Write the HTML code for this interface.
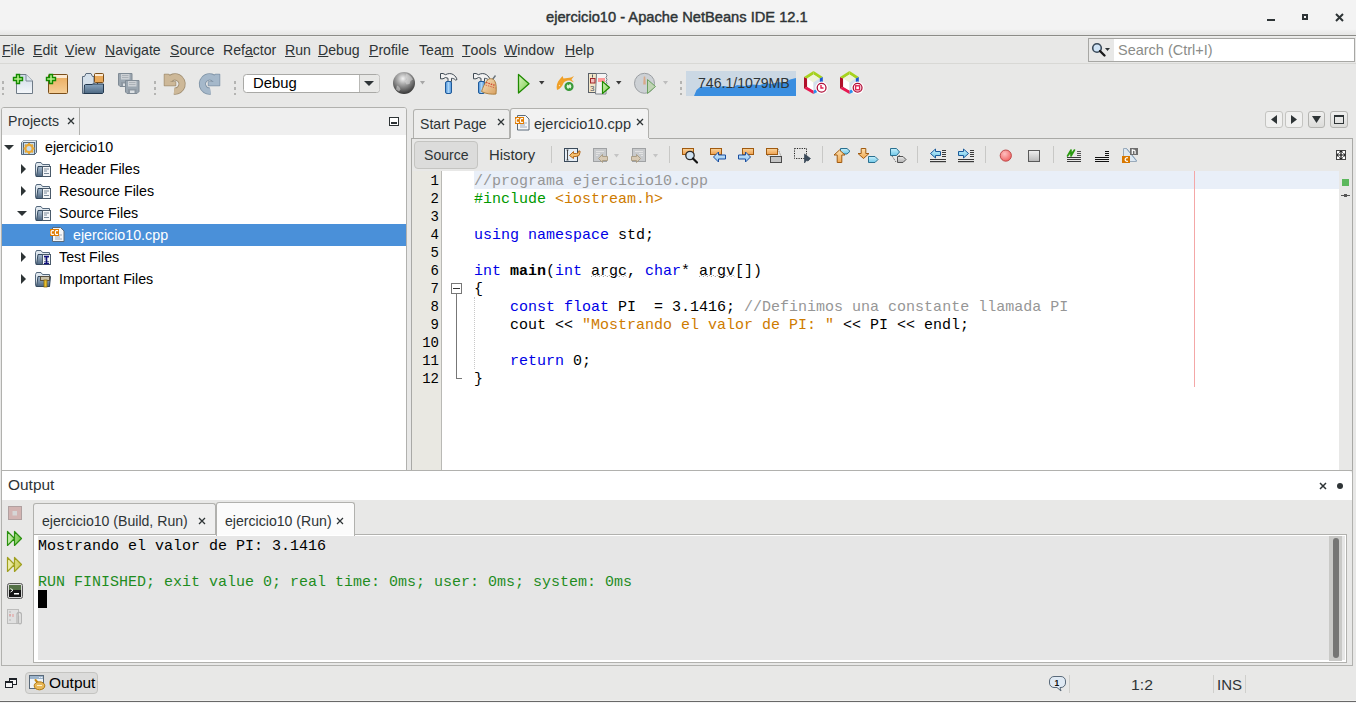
<!DOCTYPE html>
<html><head><meta charset="utf-8">
<style>
*{margin:0;padding:0;box-sizing:border-box}
html,body{width:1356px;height:703px;overflow:hidden;background:#e8e8e7;font-family:"Liberation Sans",sans-serif;color:#2e3436}
.a{position:absolute}
.t{position:absolute;white-space:pre;font-size:15px;line-height:18px;transform-origin:0 0;transform:scaleX(.94)}
.m{position:absolute;white-space:pre;font-family:"Liberation Mono",monospace;font-size:15px;line-height:18px;color:#000}
u{text-decoration:none;position:relative}
u:after{content:"";position:absolute;left:0;right:0;bottom:1px;height:1px;background:#2e3436}
svg{position:absolute;overflow:visible}
.cm{color:#969696}.kw{color:#0000e6}.pp{color:#009900}.st{color:#ce7b00}.b{font-weight:bold}
</style></head><body>
<!-- ===== title bar ===== -->
<div class="a" style="left:0;top:0;width:1356px;height:35px;background:linear-gradient(#f3f3f3 0,#f3f3f3 29px,#e6e6e5 35px)"></div>
<div class="a" style="left:0;top:35px;width:1356px;height:1px;background:#8c8c88"></div>
<div class="a" style="left:0;top:36px;width:1356px;height:1px;background:#eeeeec"></div>
<div class="t" style="left:546px;top:8px;-webkit-text-stroke:.45px #2e3436;transform:scaleX(.978)">ejercicio10 - Apache NetBeans IDE 12.1</div>
<div class="a" style="left:1267px;top:19px;width:8px;height:2px;background:#2e3436"></div>
<div class="a" style="left:1302px;top:14px;width:6px;height:6px;border:2px solid #2e3436"></div>
<svg style="left:1335px;top:13px" width="9" height="9"><path d="M1 1L8 8M8 1L1 8" stroke="#2e3436" stroke-width="2"/></svg>

<!-- ===== menubar ===== -->
<div class="a" style="left:0;top:63px;width:1356px;height:1px;background:#d8d8d5"></div>
<div class="t" style="left:2px;top:41px"><u>F</u>ile</div>
<div class="t" style="left:33px;top:41px"><u>E</u>dit</div>
<div class="t" style="left:65px;top:41px"><u>V</u>iew</div>
<div class="t" style="left:105px;top:41px"><u>N</u>avigate</div>
<div class="t" style="left:170px;top:41px"><u>S</u>ource</div>
<div class="t" style="left:223px;top:41px">Ref<u>a</u>ctor</div>
<div class="t" style="left:285px;top:41px"><u>R</u>un</div>
<div class="t" style="left:318px;top:41px"><u>D</u>ebug</div>
<div class="t" style="left:369px;top:41px"><u>P</u>rofile</div>
<div class="t" style="left:419px;top:41px">Tea<u>m</u></div>
<div class="t" style="left:462px;top:41px"><u>T</u>ools</div>
<div class="t" style="left:504px;top:41px"><u>W</u>indow</div>
<div class="t" style="left:565px;top:41px"><u>H</u>elp</div>

<!-- search -->
<div class="a" style="left:1088px;top:38px;width:267px;height:24px;border:1px solid #a7a7a4;background:#fff"></div>
<div class="a" style="left:1089px;top:39px;width:25px;height:22px;background:#e8e8e7"></div>
<svg style="left:1091px;top:42px" width="20" height="16"><circle cx="6" cy="6" r="4.3" fill="#cfe3f5" stroke="#3a4a5a" stroke-width="1.6"/><path d="M9 9L13.5 13.5" stroke="#1a1a1a" stroke-width="2.4" stroke-linecap="round"/><path d="M14 6h5l-2.5 3z" fill="#2e3436"/></svg>
<div class="t" style="left:1118px;top:41px;color:#8a8c88;transform:scaleX(.965)">Search (Ctrl+I)</div>

<!-- ===== toolbar ===== -->
<svg style="left:0;top:64px" width="900" height="40" viewBox="0 64 900 40">
<defs>
<linearGradient id="gPage" x1="0" y1="0" x2="0" y2="1"><stop offset="0" stop-color="#cfdbe8"/><stop offset="1" stop-color="#f4f7fa"/></linearGradient>
<linearGradient id="gBox" x1="0" y1="0" x2="0" y2="1"><stop offset="0" stop-color="#e9a95a"/><stop offset="1" stop-color="#f5cf98"/></linearGradient>
<linearGradient id="gFold" x1="0" y1="0" x2="0" y2="1"><stop offset="0" stop-color="#8aa6c0"/><stop offset="1" stop-color="#4d6882"/></linearGradient>
<radialGradient id="gGlobe" cx=".45" cy=".3" r=".75"><stop offset="0" stop-color="#f4f4f4"/><stop offset=".35" stop-color="#a8a8a8"/><stop offset=".8" stop-color="#505050"/><stop offset="1" stop-color="#2a2a2a"/></radialGradient>
<linearGradient id="gRun" x1="0" y1="0" x2="1" y2="1"><stop offset="0" stop-color="#d9f5c0"/><stop offset="1" stop-color="#7ccc4e"/></linearGradient>
</defs>
<!-- grips -->
<g fill="#b4b4b2"><rect x="2" y="81" width="2" height="3"/><rect x="2" y="87" width="2" height="3"/><rect x="2" y="93" width="2" height="2"/>
<rect x="154" y="81" width="2" height="3"/><rect x="154" y="87" width="2" height="3"/><rect x="154" y="93" width="2" height="2"/>
<rect x="234" y="81" width="2" height="3"/><rect x="234" y="87" width="2" height="3"/><rect x="234" y="93" width="2" height="2"/>
<rect x="680" y="81" width="2" height="3"/><rect x="680" y="87" width="2" height="3"/><rect x="680" y="93" width="2" height="2"/></g>
<!-- new file -->
<path d="M16.5 74.5h9.5l6.5 6.5v12.5h-16z" fill="url(#gPage)" stroke="#6e7a86"/>
<path d="M26 74.5v6.5h6.5" fill="#dde6ee" stroke="#7c8a98"/>
<path d="M16.5 74.5h3v3h3v3h-3v3h-3v-3h-3v-3h3z" fill="#b6f08a" stroke="#138a00" stroke-width="1.4"/>
<!-- new project -->
<rect x="48.5" y="74.5" width="19" height="19" rx="1" fill="url(#gBox)" stroke="#7a4e1a"/>
<rect x="49" y="75" width="18" height="3" fill="#fbe9d2"/>
<path d="M49.5 74.5h3v3h3v3h-3v3h-3v-3h-3v-3h3z" fill="#b6f08a" stroke="#138a00" stroke-width="1.4"/>
<!-- open project -->
<path d="M82.5 76.5h2l1.5-3h5l1.5 3h1.5v16.5a.5.5 0 0 1 -.5.5h-11z" fill="#d5e0ea" stroke="#5a6a7c"/>
<rect x="94.5" y="73.5" width="9" height="9" rx="1" fill="#e9a95a" stroke="#7a4e1a"/>
<rect x="95" y="74" width="8" height="2" fill="#fbe9d2"/>
<path d="M97.5 83v2" stroke="#3a4a5a"/>
<path d="M84 93.5l0.5-8.5l1-0.5h6.5l1-0.5h10.5v8.5l-1 1z" fill="url(#gFold)" stroke="#23384e"/>
<!-- save all -->
<path d="M118.5 73.5h13.5v11l-2 2h-10l-1.5-1.5z" fill="#9ba6b0" stroke="#808b95"/>
<rect x="121" y="74" width="8.5" height="5.5" fill="#cdd1d5"/>
<path d="M122 75.5h6.5M122 77.5h6.5" stroke="#a8aeb4" stroke-width=".9"/>
<rect x="121" y="82" width="8.5" height="4" fill="#8e98a2"/>
<rect x="123" y="83.5" width="4.5" height="2.5" fill="#dde1e4"/>
<path d="M125.5 80.5h13.5v11l-2 2h-10l-1.5-1.5z" fill="#9ba6b0" stroke="#808b95"/>
<rect x="128" y="81" width="8.5" height="5.5" fill="#cdd1d5"/>
<path d="M129 82.5h6.5M129 84.5h6.5" stroke="#a8aeb4" stroke-width=".9"/>
<rect x="128" y="89" width="8.5" height="4" fill="#8e98a2"/>
<rect x="130" y="90.5" width="4.5" height="2.5" fill="#dde1e4"/>
<!-- undo -->
<g stroke="#a08e72" fill="#a08e72" stroke-linejoin="round">
<path d="M169.18 79.93A7.1 7.1 0 1 1 174.13 91.05" fill="none" stroke-width="7.3"/>
<path d="M164.5 74.5L168.5 74.5L172 78L170.5 82L175.5 82L175.5 85.5L164.5 85.5Z" stroke-width="1.5"/></g>
<g stroke="#cdb898" fill="#cdb898" stroke-linejoin="round">
<path d="M169.18 79.93A7.1 7.1 0 1 1 174.13 91.05" fill="none" stroke-width="5.6"/>
<path d="M164.5 74.5L168.5 74.5L172 78L170.5 82L175.5 82L175.5 85.5L164.5 85.5Z" stroke-width="0"/></g>
<!-- redo -->
<g stroke="#7f93a6" fill="#7f93a6" stroke-linejoin="round">
<path d="M215.32 79.93A7.1 7.1 0 1 0 210.37 91.05" fill="none" stroke-width="7.3"/>
<path d="M219.5 74.5L215.5 74.5L212 78L213.5 82L208.5 82L208.5 85.5L219.5 85.5Z" stroke-width="1.5"/></g>
<g stroke="#a5b8ca" fill="#a5b8ca" stroke-linejoin="round">
<path d="M215.32 79.93A7.1 7.1 0 1 0 210.37 91.05" fill="none" stroke-width="5.6"/>
<path d="M219.5 74.5L215.5 74.5L212 78L213.5 82L208.5 82L208.5 85.5L219.5 85.5Z" stroke-width="0"/></g>
<!-- combo -->
<rect x="243.5" y="74.5" width="136" height="18" rx="3" fill="#fff" stroke="#a9a9a6"/>
<path d="M359.5 75v17" stroke="#b9b9b6"/>
<path d="M360 75h16.5a3 3 0 0 1 3 3v11a3 3 0 0 1 -3 3h-16.5z" fill="#e8e8e6"/>
<path d="M364 81h10l-5 5z" fill="#2e3436"/>
<!-- globe -->
<circle cx="404" cy="83" r="11" fill="url(#gGlobe)"/>
<path d="M406 73.5c3 1 6 3.5 7 6l-2.5 1.5l-1 3l-3 0.5l-1.5-3l2-2l-1.5-3z M397 85.5c1.5 0.5 3 2 3.5 4l-1.5 2l-3-2z" fill="#d8d8d8" opacity=".55"/>
<path d="M420 81h5l-2.5 3.5z" fill="#a6a6a6"/>
<!-- hammer -->
<defs><linearGradient id="gHnd" x1="0" y1="0" x2="1" y2="0"><stop offset="0" stop-color="#4a90d8"/><stop offset=".5" stop-color="#a8d4f8"/><stop offset="1" stop-color="#4a90d8"/></linearGradient>
<linearGradient id="gBrm" x1="0" y1="0" x2="1" y2="1"><stop offset="0" stop-color="#f8e4c0"/><stop offset="1" stop-color="#d8a060"/></linearGradient></defs>
<g id="ham">
<path d="M440.5 73.5h2.5l2.5 1.2c2.5-1.5 6-1.6 8.2 0.2c1.6 1.2 2.8 2.8 3.3 4.6l-1.3 0.6c-1.2-1.2-2.6-1.8-4.2-1.8v3.2h-3.5v-3.2l-2.5-0.8l-2.5 1.3h-2.5z" fill="#f2f2f2" stroke="#3f4a54" stroke-linejoin="round"/>
<rect x="445.5" y="81.5" width="6" height="12" rx="1.5" fill="url(#gHnd)" stroke="#1f5a9a"/>
</g>
<!-- clean build -->
<use href="#ham" x="33" y="0"/>
<path d="M492.5 79.5l3-4" stroke="#6a747c" stroke-width="1.4"/>
<path d="M481.5 91.5c1.5-4 3-8.5 6-11.5c2-2 5.5-1.5 7 0.5c2 3 2 8 1.5 13.5c-4 0.5-10 0-14.5-2.5z" fill="url(#gBrm)" stroke="#a87a3a" stroke-width=".9"/>
<path d="M486 82.5l9.5 3" stroke="#d04030" stroke-width="1.3" stroke-dasharray="1.5 1"/>
<path d="M485.5 85l10 3" stroke="#d04030" stroke-width="1" stroke-dasharray="1.5 1" opacity=".7"/>
<!-- run -->
<path d="M518.5 74.5v18.5l10.5-9.25z" fill="url(#gRun)" stroke="#1f8a00" stroke-width="1.3" stroke-linejoin="round"/>
<path d="M539 81h5.5l-2.75 3.5z" fill="#3a3a3a"/>
<!-- debug fish -->
<path d="M557 90C556 86 557 82 560 79L562.5 76L563.5 78.5C566 78 569 78 571 77.5L574 76L571.5 79.5L574 82.5L570 80.5C567 80.5 565 81 563.5 83C562.5 86 560 89 557 90Z" fill="#f0a028"/>
<circle cx="559.5" cy="85.5" r=".7" fill="#fce0b0"/>
<circle cx="569" cy="86.5" r="3.5" fill="#e0f4d8" stroke="#3a9a3a" stroke-width="2.2"/>
<path d="M566.5 83.5l3.5-1.5l-1 3.5zM571.5 89.5l-3.5 1.5l1-3.5z" fill="#3a9a3a"/>
<!-- test/profile -->
<rect x="588.5" y="73.5" width="8" height="19" fill="#f2e6c8" stroke="#5a6068"/>
<path d="M596.5 73.5h9.5l1 2l-1 2l1 2l-1 2l1 2l-1 2v8.5h-10.5z" fill="#f4f4f4" stroke="#7a8088"/>
<rect x="590.5" y="78.5" width="4.5" height="4.5" fill="#f0c0c0" stroke="#a02828" stroke-width="1"/>
<path d="M592.5 74.5v3" stroke="#5a6068"/>
<text x="590" y="91" font-family="Liberation Sans" font-size="8" fill="#4a5060">3</text>
<rect x="598" y="78" width="7" height="4" fill="#ff9a9a"/>
<path d="M602.5 81.5v12l7-6z" fill="url(#gRun)" stroke="#1f8a00" stroke-width="1.2" stroke-linejoin="round"/>
<path d="M616 81h5.5l-2.75 3.5z" fill="#3a3a3a"/>
<!-- gauge -->
<circle cx="644.5" cy="83.3" r="10" fill="#cdd1d5" stroke="#9a9ea2"/>
<path d="M643.8 76.5h1.4l0.6 8h-2.6z" fill="#d8a888"/>
<path d="M647.5 79.5v14l8-7z" fill="#c0d4b4" stroke="#6aa060" stroke-linejoin="round"/>
<path d="M663 81h5l-2.5 3.5z" fill="#bdbdbd"/>
<!-- memory -->
<rect x="686" y="71" width="110" height="25" fill="#cbd8e4"/>
<path d="M694 96L696.5 90L700 87L712 86.5L716 87.5L724 86L733 87.5L737 85L745 86L752 84.5L760 85L765 83L772 84L778 82L785 83L790 79.5L796 78V96Z" fill="#3a8ee0"/>
<!-- profiler 1 -->
<g transform="translate(0,0)"><path d="M813.5 71 L822.8 77 L819.6 78.6 L813.5 74.6Z" fill="#a6d21e"/><path d="M822.8 77 L822.8 89 L819.6 87.4 L819.6 78.6Z" fill="#1a5ad0"/><path d="M822.8 89 L813.5 94 L813.5 90.6 L819.6 87.4Z" fill="#2a90f0"/><path d="M813.5 94 L804 88.5 L807.2 86.8 L813.5 90.6Z" fill="#e81850"/><path d="M804 88.5 L804 77 L807.2 78.6 L807.2 86.8Z" fill="#b0102a"/><path d="M804 77 L813.5 71 L813.5 74.6 L807.2 78.6Z" fill="#a6d21e"/><path d="M807.2 78.6 L813.5 74.6 L819.6 78.6 L813.5 82.6Z" fill="#eef4d8"/><path d="M807.2 78.6 L813.5 82.6 L813.5 90.6 L807.2 86.8Z" fill="#fff"/><path d="M813.5 82.6 L819.6 78.6 L819.6 87.4 L813.5 90.6Z" fill="#d4e0ec"/><circle cx="821.6" cy="87.8" r="6.2" fill="#fff"/><circle cx="821.6" cy="87.8" r="4.4" fill="#fff" stroke="#b0103a" stroke-width="1.3"/><path d="M821 85v3h2.5" stroke="#e02050" stroke-width="1.4" fill="none"/></g>
<g transform="translate(36,0)"><path d="M813.5 71 L822.8 77 L819.6 78.6 L813.5 74.6Z" fill="#a6d21e"/><path d="M822.8 77 L822.8 89 L819.6 87.4 L819.6 78.6Z" fill="#1a5ad0"/><path d="M822.8 89 L813.5 94 L813.5 90.6 L819.6 87.4Z" fill="#2a90f0"/><path d="M813.5 94 L804 88.5 L807.2 86.8 L813.5 90.6Z" fill="#e81850"/><path d="M804 88.5 L804 77 L807.2 78.6 L807.2 86.8Z" fill="#b0102a"/><path d="M804 77 L813.5 71 L813.5 74.6 L807.2 78.6Z" fill="#a6d21e"/><path d="M807.2 78.6 L813.5 74.6 L819.6 78.6 L813.5 82.6Z" fill="#eef4d8"/><path d="M807.2 78.6 L813.5 82.6 L813.5 90.6 L807.2 86.8Z" fill="#fff"/><path d="M813.5 82.6 L819.6 78.6 L819.6 87.4 L813.5 90.6Z" fill="#d4e0ec"/><circle cx="821.6" cy="87.8" r="6.2" fill="#fff"/><circle cx="821.6" cy="87.8" r="4.4" fill="#fff" stroke="#b0103a" stroke-width="1.3"/><rect x="819.6" y="85.8" width="4" height="4" fill="none" stroke="#e02050" stroke-width="1.4"/></g>
</svg>
<div class="t" style="left:253px;top:74px;color:#000;transform:scaleX(.99)">Debug</div>
<div class="t" style="left:698px;top:74px;color:#2e3436">746.1/1079MB</div>


<!-- ===== projects panel ===== -->
<div class="a" style="left:1px;top:107px;width:406px;height:364px;border:1px solid #b1b1ae;border-radius:3px 3px 0 0;background:#fff"></div>
<div class="a" style="left:2px;top:108px;width:404px;height:27px;background:#efefef;border-radius:2px 2px 0 0"></div>
<div class="a" style="left:79px;top:108px;width:1px;height:27px;background:#b1b1ae"></div>
<div class="t" style="left:8px;top:112px">Projects</div>
<svg style="left:67px;top:117px" width="8" height="8"><path d="M1 1L7 7M7 1L1 7" stroke="#2e3436" stroke-width="1.3"/></svg>
<div class="a" style="left:389px;top:117px;width:10px;height:9px;border:1.5px solid #2e3436;background:#fff"></div>
<div class="a" style="left:391px;top:122px;width:6px;height:2px;background:#2e3436"></div>

<!-- tree -->
<div class="a" style="left:2px;top:224px;width:404px;height:22px;background:#4a90d9"></div>
<svg style="left:4px;top:145px" width="10" height="6"><path d="M0 0h10L5 5z" fill="#2e3436"/></svg>
<svg style="left:21px;top:164px" width="6" height="10"><path d="M0 0v10L5 5z" fill="#2e3436"/></svg>
<svg style="left:21px;top:186px" width="6" height="10"><path d="M0 0v10L5 5z" fill="#2e3436"/></svg>
<svg style="left:17px;top:211px" width="10" height="6"><path d="M0 0h10L5 5z" fill="#2e3436"/></svg>
<svg style="left:21px;top:252px" width="6" height="10"><path d="M0 0v10L5 5z" fill="#2e3436"/></svg>
<svg style="left:21px;top:274px" width="6" height="10"><path d="M0 0v10L5 5z" fill="#2e3436"/></svg>
<div class="t" style="left:45px;top:138px;color:#000;transform:scaleX(.95)">ejercicio10</div>
<div class="t" style="left:59px;top:160px;color:#000;transform:scaleX(.95)">Header Files</div>
<div class="t" style="left:59px;top:182px;color:#000;transform:scaleX(.95)">Resource Files</div>
<div class="t" style="left:59px;top:204px;color:#000;transform:scaleX(.95)">Source Files</div>
<div class="t" style="left:73px;top:226px;color:#fff;transform:scaleX(.95)">ejercicio10.cpp</div>
<div class="t" style="left:59px;top:248px;color:#000;transform:scaleX(.95)">Test Files</div>
<div class="t" style="left:59px;top:270px;color:#000;transform:scaleX(.95)">Important Files</div>
<svg style="left:0;top:136px" width="80" height="150" viewBox="0 136 80 150">
<defs>
<linearGradient id="gFld" x1="0" y1="0" x2="0" y2="1"><stop offset="0" stop-color="#a8bccf"/><stop offset="1" stop-color="#4e6680"/></linearGradient>
<symbol id="fold" viewBox="0 0 16 16" width="16" height="16">
<path d="M0.5 3.5v11a1 1 0 0 0 1 1h13v-12h-7l-1.5-2h-4.5z" fill="#dfe7ee" stroke="#55687c"/>
<path d="M1.5 15.5l1.5-10h12.5l-1 10z" fill="url(#gFld)" stroke="#34495e"/>
</symbol>
<symbol id="doc" viewBox="0 0 9 11" width="9" height="11">
<rect x="0.5" y="0.5" width="8" height="10" fill="#f4f6f8" stroke="#4a5a6a"/>
<path d="M2 3h5M2 5h3M2 7.5h5" stroke="#7a8a9a" stroke-width="1"/>
</symbol>
</defs>
<!-- project icon -->
<path d="M21.5 142.5l2-2h13v12l-2 2h-13z" fill="#bcd3e6" stroke="#5a6a7a"/>
<path d="M23.5 140.5h13l-2 2h-13z" fill="#e8f0f6"/>
<rect x="23.5" y="142.5" width="11" height="12" fill="#c6dcee" stroke="#5a6a7a"/>
<g transform="translate(29,148.5)"><circle r="3.6" fill="none" stroke="#e8a838" stroke-width="2.2"/>
<path d="M0 -5.5v2M0 3.5v2M-5.5 0h2M3.5 0h2M-3.9 -3.9l1.4 1.4M2.5 2.5l1.4 1.4M-3.9 3.9l1.4 -1.4M2.5 -2.5l1.4 -1.4" stroke="#e8a838" stroke-width="2"/></g>
<!-- folders -->
<use href="#fold" x="35" y="161"/><use href="#doc" x="42" y="166"/>
<use href="#fold" x="35" y="183"/><use href="#doc" x="42" y="188"/>
<use href="#fold" x="35" y="205"/><use href="#doc" x="42" y="210"/>
<use href="#fold" x="35" y="249"/><use href="#doc" x="42" y="254"/>
<path d="M44 256.5h5M46.5 256.5v7M44 263.5h5" stroke="#10107a" stroke-width="1.6"/>
<use href="#fold" x="35" y="271"/>
<rect x="40.5" y="276.5" width="9" height="4" fill="#c8c0a8" stroke="#5a5040"/>
<rect x="44" y="280" width="3" height="7" fill="#e8c030" stroke="#8a6a10" stroke-width=".8"/>
<!-- cpp file -->
<path d="M52.5 227.5h8l3.5 3.5v10.5h-11.5z" fill="#f4f6f8" stroke="#5a6a7a"/>
<path d="M55 235h7M55 237h5M55 239h7" stroke="#8a9aaa" stroke-width=".8"/>
<rect x="50" y="229" width="9" height="7" fill="#e07b00"/>
<path d="M53.9 230.6h-1.7a1 1 0 0 0 -1 1v1.8a1 1 0 0 0 1 1h1.7M58.1 230.6h-1.7a1 1 0 0 0 -1 1v1.8a1 1 0 0 0 1 1h1.7" fill="none" stroke="#fff" stroke-width="1.15"/>
</svg>


<!-- ===== editor ===== -->
<!-- tabs -->
<div class="a" style="left:413px;top:109px;width:97px;height:29px;border:1px solid #b1b1ae;border-bottom:none;border-radius:3px 3px 0 0;background:#ededec"></div>
<div class="a" style="left:510px;top:108px;width:139px;height:31px;border:1px solid #b1b1ae;border-bottom:none;border-radius:3px 3px 0 0;background:#f2f2f2"></div>
<div class="t" style="left:420px;top:115px">Start Page</div>
<svg style="left:497px;top:118px" width="8" height="8"><path d="M1 1L7 7M7 1L1 7" stroke="#2e3436" stroke-width="1.3"/></svg>
<svg style="left:510px;top:112px" width="25" height="22" viewBox="510 112 25 22">
<path d="M517.5 115.5h8l3.5 3.5v11h-11.5z" fill="#f4f6f8" stroke="#5a6a7a"/>
<path d="M520 123h7M520 125h5M520 127h7" stroke="#8a9aaa" stroke-width=".8"/>
<rect x="515" y="117" width="9" height="7" fill="#e07b00"/>
<path d="M518.9 118.6h-1.7a1 1 0 0 0 -1 1v1.8a1 1 0 0 0 1 1h1.7M523.1 118.6h-1.7a1 1 0 0 0 -1 1v1.8a1 1 0 0 0 1 1h1.7" fill="none" stroke="#fff" stroke-width="1.15"/>
</svg>
<div class="t" style="left:534px;top:115px;transform:scaleX(.97)">ejercicio10.cpp</div>
<svg style="left:636px;top:118px" width="8" height="8"><path d="M1 1L7 7M7 1L1 7" stroke="#2e3436" stroke-width="1.3"/></svg>
<!-- tab nav buttons -->
<div class="a" style="left:1265px;top:111px;width:18px;height:17px;border:1px solid #c4c4c1;border-radius:3px;background:#f0f0ef"></div>
<div class="a" style="left:1285px;top:111px;width:18px;height:17px;border:1px solid #c4c4c1;border-radius:3px;background:#f0f0ef"></div>
<div class="a" style="left:1308px;top:111px;width:17px;height:17px;border:1px solid #b4b4b1;border-radius:3px;background:linear-gradient(#f0f0ef,#dcdcda)"></div>
<div class="a" style="left:1330px;top:111px;width:18px;height:17px;border:1px solid #b4b4b1;border-radius:3px;background:linear-gradient(#f0f0ef,#dcdcda)"></div>
<svg style="left:1271px;top:115px" width="6" height="9"><path d="M6 0v9L0 4.5z" fill="#2e3436"/></svg>
<svg style="left:1291px;top:115px" width="6" height="9"><path d="M0 0v9L6 4.5z" fill="#2e3436"/></svg>
<svg style="left:1312px;top:116px" width="9" height="7"><path d="M0 0h9L4.5 7z" fill="#2e3436"/></svg>
<div class="a" style="left:1334px;top:115px;width:10px;height:9px;border:1.5px solid #2e3436;border-top-width:2px"></div>

<!-- editor body -->
<div class="a" style="left:411px;top:138px;width:942px;height:333px;border:1px solid #a9a9a6;border-bottom:none;background:#e8e8e7"></div>
<div class="a" style="left:510px;top:138px;width:139px;height:2px;background:#f2f2f2"></div>
<div class="a" style="left:412px;top:139px;width:940px;height:32px;background:#e8e8e7"></div>
<div class="a" style="left:414px;top:141px;width:64px;height:28px;border:1px solid #c4c4c1;border-radius:4px;background:#dcdcdb"></div>
<div class="t" style="left:424px;top:146px">Source</div>
<div class="t" style="left:489px;top:146px;transform:scaleX(.99)">History</div>
<svg style="left:540px;top:140px" width="620" height="30" viewBox="540 140 620 30">
<g fill="#c8c8c6"><rect x="551" y="146" width="1" height="17"/><rect x="669" y="146" width="1" height="17"/><rect x="822" y="146" width="1" height="17"/><rect x="917" y="146" width="1" height="17"/><rect x="985" y="146" width="1" height="17"/><rect x="1053" y="146" width="1" height="17"/></g>
<!-- last edit -->
<rect x="564.5" y="148.5" width="13" height="13" fill="#e6eef6" stroke="#3a4a5a"/>
<path d="M566.5 150h2M567.5 150v10M566.5 160h2" stroke="#333" stroke-width=".9"/>
<path d="M569.5 155.5l4-4v2h3a2 2 0 0 0 2-2v-0.5h1.5v1.5a4 4 0 0 1 -4 4h-2.5v2z" fill="#f4c070" stroke="#b06010" stroke-width=".9" stroke-linejoin="round"/>
<!-- back/fwd disabled -->
<rect x="593.5" y="148.5" width="13" height="13" fill="#c8cacc" stroke="#a0a2a4"/>
<path d="M596 151.5h8M596 153.5h4M596 155.5h2" stroke="#e4e4e4" stroke-width=".9"/>
<path d="M598.5 158.5l4-4v2h5v4h-5v2z" fill="#d8cab4" stroke="#a89a80" stroke-width=".9" stroke-linejoin="round"/>
<path d="M614 154h5l-2.5 3.5z" fill="#c4c4c4"/>
<rect x="632.5" y="148.5" width="13" height="13" fill="#c8cacc" stroke="#a0a2a4"/>
<path d="M635 151.5h8M639 153.5h4M641 155.5h2" stroke="#e4e4e4" stroke-width=".9"/>
<path d="M640.5 158.5l-4-4v2h-5v4h5v2z" fill="#d8cab4" stroke="#a89a80" stroke-width=".9" stroke-linejoin="round"/>
<path d="M653 154h5l-2.5 3.5z" fill="#c4c4c4"/>
<!-- find -->
<defs><linearGradient id="gOr" x1="0" y1="0" x2="0" y2="1"><stop offset="0" stop-color="#fad49a"/><stop offset="1" stop-color="#eea050"/></linearGradient>
<linearGradient id="gBl" x1="0" y1="0" x2="0" y2="1"><stop offset="0" stop-color="#d8ecfc"/><stop offset="1" stop-color="#8cc4f0"/></linearGradient></defs>
<rect x="682.5" y="148.5" width="11" height="6" fill="url(#gOr)" stroke="#a05a10"/>
<circle cx="690" cy="155.5" r="4.2" fill="#cfe2f2" stroke="#2a2a2a" stroke-width="1.3"/>
<path d="M693 158.5l4 4" stroke="#111" stroke-width="2.2" stroke-linecap="round"/>
<!-- find prev -->
<rect x="710.5" y="148.5" width="11" height="6" fill="url(#gOr)" stroke="#a05a10"/>
<path d="M713.5 157l5-5v3h7v4h-7v3z" fill="url(#gBl)" stroke="#1a4ea0" stroke-linejoin="round"/>
<!-- find next -->
<rect x="742.5" y="148.5" width="11" height="6" fill="url(#gOr)" stroke="#a05a10"/>
<path d="M750.5 157l-5-5v3h-7v4h7v3z" fill="url(#gBl)" stroke="#1a4ea0" stroke-linejoin="round"/>
<!-- toggle highlight -->
<rect x="766.5" y="148.5" width="11" height="6" fill="url(#gOr)" stroke="#a05a10"/>
<rect x="770.5" y="156.5" width="11" height="6" fill="#c4c4c4" stroke="#4a4a4a"/>
<path d="M767 155l3 2M778 149l3 7" stroke="#666" stroke-width=".8" stroke-dasharray="1 1"/>
<!-- rect select -->
<rect x="794.5" y="148.5" width="12" height="10" fill="none" stroke="#222" stroke-width="1" stroke-dasharray="1.2 1.2"/>
<path d="M804.5 154v9l2-2.5l1.5 0.5l2.5-2.5z" fill="#3a4a5a" stroke="#2a3a4a" stroke-width=".6" stroke-linejoin="round"/>
<!-- prev bookmark -->
<defs><linearGradient id="gTag" x1="0" y1="0" x2="0" y2="1"><stop offset="0" stop-color="#c8f0fc"/><stop offset="1" stop-color="#70c8e8"/></linearGradient>
<linearGradient id="gArO" x1="0" y1="0" x2="0" y2="1"><stop offset="0" stop-color="#fce0b0"/><stop offset="1" stop-color="#f0a850"/></linearGradient>
<linearGradient id="gGr" x1="0" y1="0" x2="0" y2="1"><stop offset="0" stop-color="#e8e8e8"/><stop offset="1" stop-color="#b0b0b0"/></linearGradient></defs>
<path d="M840.5 148.5h6.5l3 2.75l-3 2.75h-6.5z" fill="url(#gTag)" stroke="#2a7090" stroke-linejoin="round"/>
<path d="M839.5 150l5.5 5h-3.2v7.5h-4.6v-7.5h-3.2z" fill="url(#gArO)" stroke="#a05a10" stroke-linejoin="round"/>
<!-- next bookmark -->
<path d="M868.5 156.5h6.5l3 3l-3 3h-6.5z" fill="url(#gTag)" stroke="#2a7090" stroke-linejoin="round"/>
<path d="M863.5 158.5l5.5-5h-3.2v-5h-4.6v5h-3.2z" fill="url(#gArO)" stroke="#a05a10" stroke-linejoin="round"/>
<!-- toggle bookmark -->
<path d="M890.5 148.5h6l3 3.5l-3 3.5h-6z" fill="url(#gTag)" stroke="#2a7090" stroke-linejoin="round"/>
<path d="M897.5 156.5h5.5l3 3l-3 3h-5.5z" fill="url(#gGr)" stroke="#555" stroke-linejoin="round"/>
<path d="M892 156l4 6M899 155l1 2" stroke="#444" stroke-width=".9" stroke-dasharray="1 1"/>
<!-- shift left -->
<path d="M930.5 153.5l5-4.5v2.5h5v4h-5v2.5z" fill="url(#gTag)" stroke="#1a5a9a" stroke-linejoin="round"/>
<g fill="#3a3a3a"><rect x="942" y="150" width="4" height="1"/><rect x="942" y="152" width="4" height="1"/><rect x="942" y="154" width="4" height="1"/><rect x="942" y="156" width="4" height="1"/><rect x="930" y="159" width="16" height="1"/><rect x="930" y="161" width="16" height="1.2"/></g>
<!-- shift right -->
<path d="M968.5 153.5l-5-4.5v2.5h-5v4h5v2.5z" fill="url(#gTag)" stroke="#1a5a9a" stroke-linejoin="round"/>
<g fill="#3a3a3a"><rect x="970" y="150" width="4" height="1"/><rect x="970" y="152" width="4" height="1"/><rect x="970" y="154" width="4" height="1"/><rect x="970" y="156" width="4" height="1"/><rect x="958" y="159" width="16" height="1"/><rect x="958" y="161" width="16" height="1.2"/></g>
<!-- record -->
<defs><radialGradient id="gRec" cx=".4" cy=".35" r=".7"><stop offset="0" stop-color="#ffc0c0"/><stop offset="1" stop-color="#f06060"/></radialGradient>
<linearGradient id="gStop" x1="0" y1="0" x2="0" y2="1"><stop offset="0" stop-color="#f0f0f0"/><stop offset="1" stop-color="#b8b8b8"/></linearGradient></defs>
<circle cx="1005.8" cy="155.6" r="5.6" fill="url(#gRec)" stroke="#b84040" stroke-width=".9"/>
<rect x="1028.5" y="150.5" width="11" height="11" fill="url(#gStop)" stroke="#5a5a5a"/>
<!-- comment -->
<path d="M1067.5 156l3.5-6l0 4.5l3.5-4.5l-3.5 6l0-4.5z" fill="none" stroke="#2a9a10" stroke-width="1.6" stroke-linejoin="round"/>
<g fill="#555"><rect x="1077" y="151" width="4" height="1"/><rect x="1077" y="153" width="4" height="1"/><rect x="1077" y="155" width="4" height="1"/></g>
<g fill="#3a3a3a"><rect x="1067" y="157" width="14" height="1"/><rect x="1067" y="159" width="14" height="1"/><rect x="1067" y="161" width="14" height="1"/></g>
<!-- uncomment -->
<g fill="#111"><rect x="1105" y="151" width="4" height="1"/><rect x="1105" y="153" width="4" height="1"/><rect x="1105" y="155" width="4" height="1"/><rect x="1095" y="157" width="14" height="1"/><rect x="1095" y="159" width="14" height="1"/><rect x="1095" y="161" width="14" height="1"/></g>
<!-- header/source -->
<path d="M1123.5 148.5h3l10 12v1h-13z" fill="#dde8f2" stroke="#9aaaba"/>
<path d="M1126.5 148.5l10 12.5" stroke="#7a9aba" stroke-width=".8"/>
<rect x="1130" y="148" width="8" height="7" fill="#6e6e6e"/>
<path d="M1132.3 149.3v4.6M1132.3 151.5a1.4 1.4 0 0 1 2.8 0v2.4" stroke="#fff" stroke-width="1.2" fill="none"/>
<rect x="1122" y="156" width="8" height="7" fill="#d87800"/>
<path d="M1127.8 157.9a1.8 1.8 0 1 0 0 3.2" stroke="#fff" stroke-width="1.3" fill="none"/>
</svg>
<svg style="left:1330px;top:145px" width="20" height="20" viewBox="1330 145 20 20">
<rect x="1336.5" y="150.5" width="9" height="9" fill="#fff" stroke="#444"/>
<path d="M1341 151v8M1337 155h8" stroke="#111" stroke-width="1.2"/>
<path d="M1339 152.5l2-1.5l2 1.5M1339 157.5l2 1.5l2-1.5M1338.5 153l-1.5 2l1.5 2M1343.5 153l1.5 2l-1.5 2" stroke="#111" fill="none" stroke-width=".9"/>
</svg>


<div class="a" style="left:412px;top:171px;width:29px;height:299px;background:#e9e8e2"></div>
<div class="a" style="left:441px;top:171px;width:1px;height:299px;background:#b9b9b5"></div>
<div class="a" style="left:442px;top:171px;width:897px;height:299px;background:#fff"></div>
<div class="a" style="left:474px;top:171px;width:865px;height:18px;background:#e9eff8"></div>
<div class="a" style="left:1194px;top:171px;width:1px;height:216px;background:#f4a7a7"></div>
<div class="a" style="left:1339px;top:171px;width:13px;height:299px;background:#e8e8e7"></div>
<div class="a" style="left:1342px;top:179px;width:7px;height:7px;background:#5cb85c"></div>
<div class="a" style="left:1341px;top:195px;width:9px;height:1px;background:#555"></div>
<div class="a" style="left:1344px;top:194px;width:3px;height:3px;background:#555"></div>

<!-- line numbers -->
<div class="m" style="left:413px;top:172px;width:26px;text-align:right;font-size:14px;line-height:18px">1
2
3
4
5
6
7
8
9
10
11
12</div>
<!-- fold -->
<div class="a" style="left:451px;top:283px;width:11px;height:11px;border:1px solid #777;background:#fff"></div>
<div class="a" style="left:453px;top:288px;width:7px;height:1px;background:#333"></div>
<div class="a" style="left:456px;top:294px;width:1px;height:85px;background:#777"></div>
<div class="a" style="left:456px;top:378px;width:6px;height:1px;background:#777"></div>
<div class="a" style="left:474px;top:297px;width:1px;height:72px;border-left:1px dotted #c8c8c8"></div>

<!-- code -->
<svg style="left:585px;top:270px" width="150" height="10" viewBox="585 270 150 10">
<path d="M591 277l2-2l2 2l2-2l2 2l2-2l2 2l2-2l2 2l2-2l2 2l2-2l2 2l2-2l2 2l2-2l2 2l2-2l2 2M699 277l2-2l2 2l2-2l2 2l2-2l2 2l2-2l2 2l2-2l2 2l2-2l2 2l2-2l2 2l2-2l2 2l2-2l2 2" fill="none" stroke="#9a9a9a" stroke-width=".9" stroke-dasharray="1.6 1.2"/>
</svg>
<div class="m" style="left:474px;top:173px"><span class="cm">//programa ejercicio10.cpp</span>
<span class="pp">#include </span><span class="st">&lt;iostream.h&gt;</span>

<span class="kw">using</span> <span class="kw">namespace</span> std;

<span class="kw">int</span> <span class="b">main</span>(<span class="kw">int</span> argc, <span class="kw">char</span>* argv[])
{
    <span class="kw">const</span> <span class="kw">float</span> PI  = 3.1416; <span class="cm">//Definimos una constante llamada PI</span>
    cout &lt;&lt; <span class="st">"Mostrando el valor de PI: "</span> &lt;&lt; PI &lt;&lt; endl;

    <span class="kw">return</span> 0;
}</div>

<!-- ===== output ===== -->
<div class="a" style="left:1px;top:470px;width:1352px;height:196px;border:1px solid #b1b1ae;border-top:none;background:#e8e8e7"></div>
<div class="a" style="left:1px;top:470px;width:1352px;height:1px;background:#b1b1ae"></div>
<div class="a" style="left:2px;top:471px;width:1350px;height:29px;background:#fff;border-radius:0 3px 0 0"></div>
<div class="t" style="left:8px;top:476px;transform:scaleX(1.03)">Output</div>
<svg style="left:1319px;top:482px" width="8" height="8"><path d="M1 1L7 7M7 1L1 7" stroke="#2e3436" stroke-width="1.5"/></svg>
<div class="a" style="left:1337px;top:483px;width:6px;height:6px;border-radius:50%;background:#2e3436"></div>

<!-- output tabs -->
<div class="a" style="left:33px;top:503px;width:183px;height:32px;border:1px solid #b1b1ae;border-bottom:none;border-radius:3px 3px 0 0;background:#efefef"></div>

<div class="t" style="left:42px;top:512px">ejercicio10 (Build, Run)</div>
<svg style="left:198px;top:517px" width="8" height="8"><path d="M1 1L7 7M7 1L1 7" stroke="#2e3436" stroke-width="1.3"/></svg>

<!-- output content -->
<div class="a" style="left:33px;top:534px;width:1314px;height:129px;border:1px solid #b1b1ae;background:#fff"></div>
<div class="a" style="left:38px;top:536px;width:1307px;height:124px;background:#e6e6e6"></div>
<div class="a" style="left:216px;top:502px;width:139px;height:34px;border:1px solid #b1b1ae;border-bottom:none;border-radius:3px 3px 0 0;background:#fbfbfb"></div>
<div class="a" style="left:217px;top:535px;width:137px;height:1px;background:#fff"></div>
<div class="t" style="left:225px;top:512px">ejercicio10 (Run)</div>
<svg style="left:336px;top:517px" width="8" height="8"><path d="M1 1L7 7M7 1L1 7" stroke="#2e3436" stroke-width="1.2"/></svg>
<div class="m" style="left:38px;top:538px">Mostrando el valor de PI: 3.1416

<span style="color:#1f8c1f">RUN FINISHED; exit value 0; real time: 0ms; user: 0ms; system: 0ms</span></div>
<div class="a" style="left:38px;top:590px;width:9px;height:18px;background:#000"></div>
<!-- scrollbar -->
<div class="a" style="left:1329px;top:536px;width:13px;height:125px;background:#c9c9c7"></div>
<div class="a" style="left:1333px;top:538px;width:6px;height:120px;border-radius:3px;background:#757574"></div>
<svg style="left:0;top:500px" width="34" height="130" viewBox="0 500 34 130">
<defs><linearGradient id="gG2" x1="0" y1="0" x2="1" y2="0"><stop offset="0" stop-color="#d0f4b8"/><stop offset="1" stop-color="#6cc040"/></linearGradient>
<linearGradient id="gY2" x1="0" y1="0" x2="1" y2="0"><stop offset="0" stop-color="#f4f4b8"/><stop offset="1" stop-color="#c8c850"/></linearGradient></defs>
<rect x="8.5" y="506.5" width="13" height="13" fill="#d2b4b2" stroke="#b0a0a0"/>
<rect x="12.5" y="511" width="4.5" height="4.5" fill="#d6d6d6"/>
<path d="M7.5 531.5v14l7-7zM14.5 531.5v14l7-7z" fill="url(#gG2)" stroke="#2a9010" stroke-width="1.2" stroke-linejoin="round"/>
<path d="M7.5 557.5v14l7-7zM14.5 557.5v14l7-7z" fill="url(#gY2)" stroke="#a0a020" stroke-width="1.2" stroke-linejoin="round"/>
<rect x="7.5" y="583.5" width="15" height="15" rx="2" fill="#d8d8d8" stroke="#5a5a5a"/>
<rect x="9" y="585" width="12" height="12" fill="#141414"/>
<rect x="9" y="585" width="12" height="5" fill="#5a7a4a" opacity=".9"/>
<path d="M10.5 588.5l2.5 1.8l-2.5 1.8" stroke="#fff" stroke-width="1" fill="none"/>
<rect x="14" y="593" width="5" height="1.5" fill="#fff"/>
<g opacity=".45"><rect x="7.5" y="609.5" width="11" height="14" fill="#d8d8d8" stroke="#888"/>
<path d="M9 612h2M9 616h2M9 620h2" stroke="#777"/><rect x="9" y="614" width="2" height="2" fill="#c66"/><rect x="12" y="614" width="2" height="3" fill="#d88"/>
<path d="M17 623.5v-9a2.2 2.2 0 0 1 4.4 0v8a1.4 1.4 0 0 1 -2.8 0v-7" fill="none" stroke="#777" stroke-width="1.2"/></g>
</svg>


<!-- ===== status bar ===== -->
<div class="a" style="left:25px;top:672px;width:73px;height:22px;border:1px solid #c4c4c1;border-radius:4px;background:#dcdcdb"></div>
<div class="t" style="left:49px;top:674px;color:#000;transform:scaleX(1.03)">Output</div>
<div class="t" style="left:1131px;top:676px;transform:scaleX(1.05)">1:2</div>
<div class="t" style="left:1217px;top:676px;transform:scaleX(1.0)">INS</div>
<div class="a" style="left:1069px;top:675px;width:1px;height:18px;background:#cfcfcc"></div>
<div class="a" style="left:1213px;top:675px;width:1px;height:18px;background:#cfcfcc"></div>
<div class="a" style="left:1245px;top:675px;width:1px;height:18px;background:#cfcfcc"></div>
<svg style="left:0;top:665px" width="1356" height="36" viewBox="0 665 1356 36">
<rect x="9.5" y="678.5" width="7" height="6" fill="#f4f4f4" stroke="#1e2228"/>
<rect x="9" y="678" width="8" height="2" fill="#1e2228"/>
<rect x="5.5" y="681.5" width="7" height="6" fill="#f4f4f4" stroke="#1e2228"/>
<rect x="5" y="681" width="8" height="2" fill="#1e2228"/>
<rect x="29.5" y="675.5" width="14" height="13" fill="#eef3f8" stroke="#5a6a7a"/>
<rect x="30" y="676" width="13" height="3" fill="#9cb4cc"/>
<path d="M39 677.5h1.5M41 677.5h1.5" stroke="#fff" stroke-width=".8"/>
<path d="M35.5 680l3 3.5" stroke="#c88a10" stroke-width="2" stroke-linecap="round"/>
<ellipse cx="39.5" cy="685.8" rx="5.3" ry="4" fill="#e8b858" stroke="#b07810"/>
<path d="M37 685.5h5" stroke="#fff3d0" stroke-width="1"/>
<path d="M1049.5 681a4.5 4.5 0 0 1 4.5-4.5h7a4.5 4.5 0 0 1 4.5 4.5v2a4.5 4.5 0 0 1 -4.5 4.5h-1l1 3.5l-4-3.5h-3a4.5 4.5 0 0 1 -4.5-4.5z" fill="#dfe9f3" stroke="#5a6a7a"/>
<text x="1054.5" y="686" font-family="Liberation Sans" font-weight="bold" font-size="8.5" fill="#111">1</text>
</svg>

<div class="a" style="left:0;top:700px;width:1356px;height:1px;background:#f0f0ee"></div>
<div class="a" style="left:0;top:701px;width:1356px;height:1px;background:#686868"></div>
<div class="a" style="left:0;top:702px;width:1356px;height:1px;background:#f5f5f5"></div>
</body></html>
